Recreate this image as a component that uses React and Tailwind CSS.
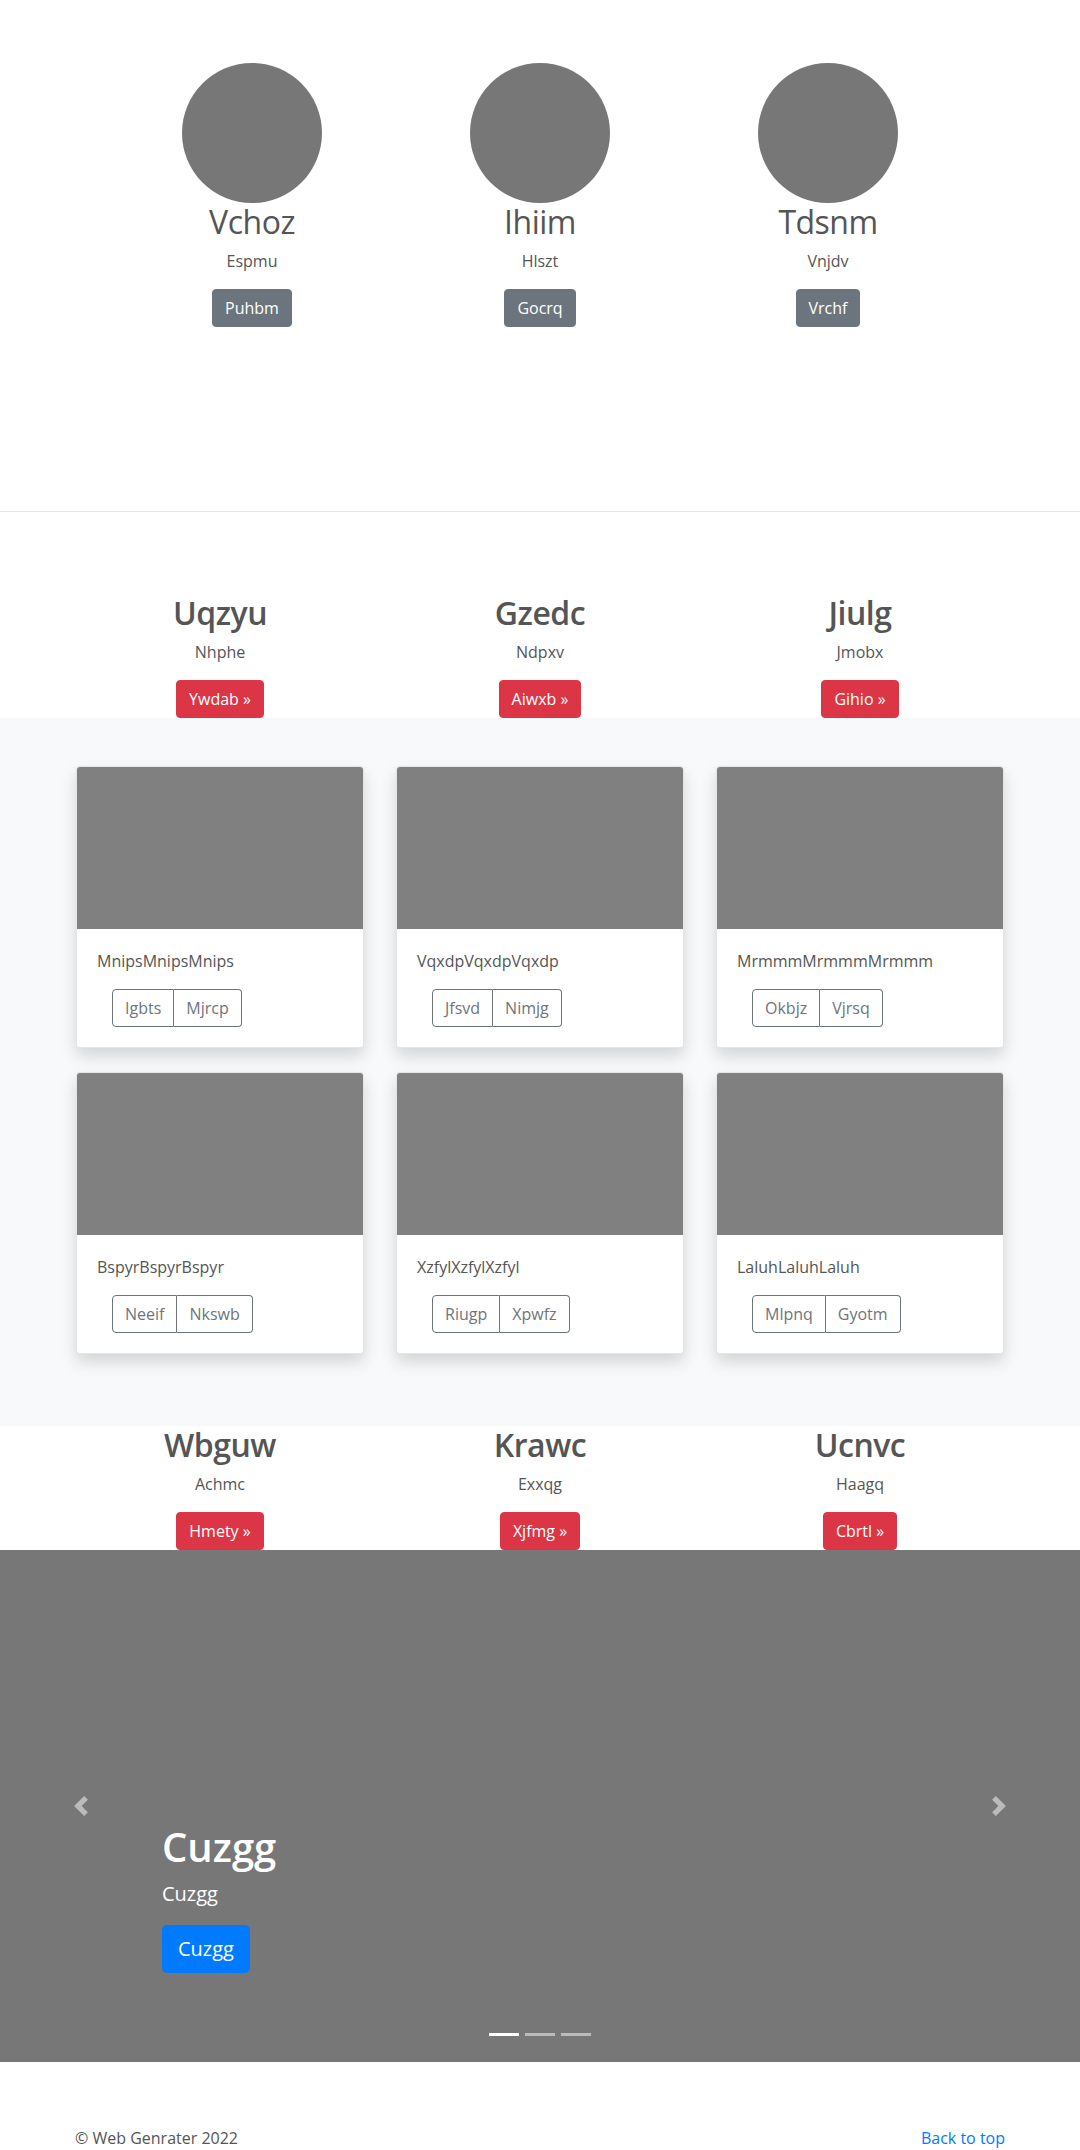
import React from "react";

const top = [
  { t: "Vchoz", s: "Espmu", b: "Puhbm" },
  { t: "Ihiim", s: "Hlszt", b: "Gocrq" },
  { t: "Tdsnm", s: "Vnjdv", b: "Vrchf" },
];
const mid = [
  { t: "Uqzyu", s: "Nhphe", b: "Ywdab »" },
  { t: "Gzedc", s: "Ndpxv", b: "Aiwxb »" },
  { t: "Jiulg", s: "Jmobx", b: "Gihio »" },
];
const low = [
  { t: "Wbguw", s: "Achmc", b: "Hmety »" },
  { t: "Krawc", s: "Exxqg", b: "Xjfmg »" },
  { t: "Ucnvc", s: "Haagq", b: "Cbrtl »" },
];
const cards = [
  { t: "MnipsMnipsMnips", a: "Igbts", b: "Mjrcp" },
  { t: "VqxdpVqxdpVqxdp", a: "Jfsvd", b: "Nimjg" },
  { t: "MrmmmMrmmmMrmmm", a: "Okbjz", b: "Vjrsq" },
  { t: "BspyrBspyrBspyr", a: "Neeif", b: "Nkswb" },
  { t: "XzfylXzfylXzfyl", a: "Riugp", b: "Xpwfz" },
  { t: "LaluhLaluhLaluh", a: "Mlpnq", b: "Gyotm" },
];

function Feature({ d }) {
  return (
    <div className="flex flex-col items-center text-center">
      <h2 className="text-[32px] leading-[38px] font-semibold tracking-[-0.5px] text-[#555]">{d.t}</h2>
      <p className="mt-2 text-base leading-6">{d.s}</p>
      <button className="mt-4 h-[38px] px-3 rounded-[4px] bg-[#dc3545] text-white text-base leading-6 border border-[#dc3545]">
        {d.b}
      </button>
    </div>
  );
}

function Chevron({ dir }) {
  return (
    <svg width="20" height="20" viewBox="0 0 8 8" className="opacity-50">
      {dir === "left" ? (
        <path fill="#fff" d="M5.25 0l-4 4 4 4 1.5-1.5L4.25 4l2.5-2.5L5.25 0z" />
      ) : (
        <path fill="#fff" d="M2.75 0l-1.5 1.5L3.75 4l-2.5 2.5L2.75 8l4-4-4-4z" />
      )}
    </svg>
  );
}

export default function App() {
  return (
    <div
      className="bg-white text-[#555] text-base"
      style={{ fontFamily: '"Segoe UI", "Open Sans", "Noto Sans", sans-serif' }}
    >
      {/* Top team section */}
      <section className="pt-[63px] pb-[184px]">
        <div className="w-[864px] mx-auto grid grid-cols-3">
          {top.map((d) => (
            <div key={d.t} className="flex flex-col items-center text-center">
              <div className="w-[140px] h-[140px] rounded-full bg-[#777]" />
              <h2 className="text-[32px] leading-[38px] font-normal tracking-[-0.5px] text-[#555]">{d.t}</h2>
              <p className="mt-2 text-base leading-6">{d.s}</p>
              <button className="mt-4 h-[38px] px-3 rounded-[4px] bg-[#6c757d] text-white text-base leading-6 border border-[#6c757d]">
                {d.b}
              </button>
            </div>
          ))}
        </div>
      </section>
      <div className="border-t border-[#e5e5e5]" />

      {/* Middle features */}
      <section className="pt-[82px]">
        <div className="w-[960px] mx-auto grid grid-cols-3">
          {mid.map((d) => (
            <Feature key={d.t} d={d} />
          ))}
        </div>
      </section>

      {/* Album */}
      <section className="bg-[#f8f9fa] py-12">
        <div className="w-[960px] mx-auto grid grid-cols-3">
          {cards.map((c) => (
            <div key={c.t} className="px-4 mb-6">
              <div className="bg-white rounded-[4px] border border-black/10 overflow-hidden shadow-[0_0.5rem_1rem_rgba(0,0,0,0.15)]">
                <div className="h-[162px] bg-[#808080]" />
                <div className="p-5">
                  <p className="text-base leading-6 mb-4">{c.t}</p>
                  <div className="ml-[15px] inline-flex">
                    <button className="h-[38px] px-3 border border-[#6c757d] rounded-l-[4px] text-[#6c757d] text-base leading-6">
                      {c.a}
                    </button>
                    <button className="h-[38px] px-3 border border-l-0 border-[#6c757d] rounded-r-[4px] text-[#6c757d] text-base leading-6">
                      {c.b}
                    </button>
                  </div>
                </div>
              </div>
            </div>
          ))}
        </div>
      </section>

      {/* Lower features */}
      <section>
        <div className="w-[960px] mx-auto grid grid-cols-3">
          {low.map((d) => (
            <Feature key={d.t} d={d} />
          ))}
        </div>
      </section>

      {/* Carousel */}
      <section className="relative h-[512px] bg-[#777]">
        <div className="absolute left-0 top-0 bottom-0 w-[15%] flex items-center justify-center">
          <Chevron dir="left" />
        </div>
        <div className="absolute right-0 top-0 bottom-0 w-[15%] flex items-center justify-center">
          <Chevron dir="right" />
        </div>
        <div className="absolute left-[15%] right-[15%] bottom-[89px] text-white text-left">
          <h1 className="text-[40px] leading-[48px] font-semibold mb-2">Cuzgg</h1>
          <p className="text-xl leading-[30px] mb-4">Cuzgg</p>
          <button className="h-[48px] px-4 rounded-[5px] bg-[#007bff] text-white text-xl leading-[30px]">
            Cuzgg
          </button>
        </div>
        <div className="absolute left-0 right-0 bottom-0 mb-4 flex justify-center">
          <span className="mx-[3px] w-[30px] h-[23px] border-y-[10px] border-transparent bg-white bg-clip-padding" />
          <span className="mx-[3px] w-[30px] h-[23px] border-y-[10px] border-transparent bg-white/50 bg-clip-padding" />
          <span className="mx-[3px] w-[30px] h-[23px] border-y-[10px] border-transparent bg-white/50 bg-clip-padding" />
        </div>
      </section>

      {/* Footer */}
      <footer className="w-[930px] mx-auto pt-16 flex justify-between text-base leading-6">
        <p>© Web Genrater 2022</p>
        <a href="#" className="text-[#007bff]">Back to top</a>
      </footer>
    </div>
  );
}
